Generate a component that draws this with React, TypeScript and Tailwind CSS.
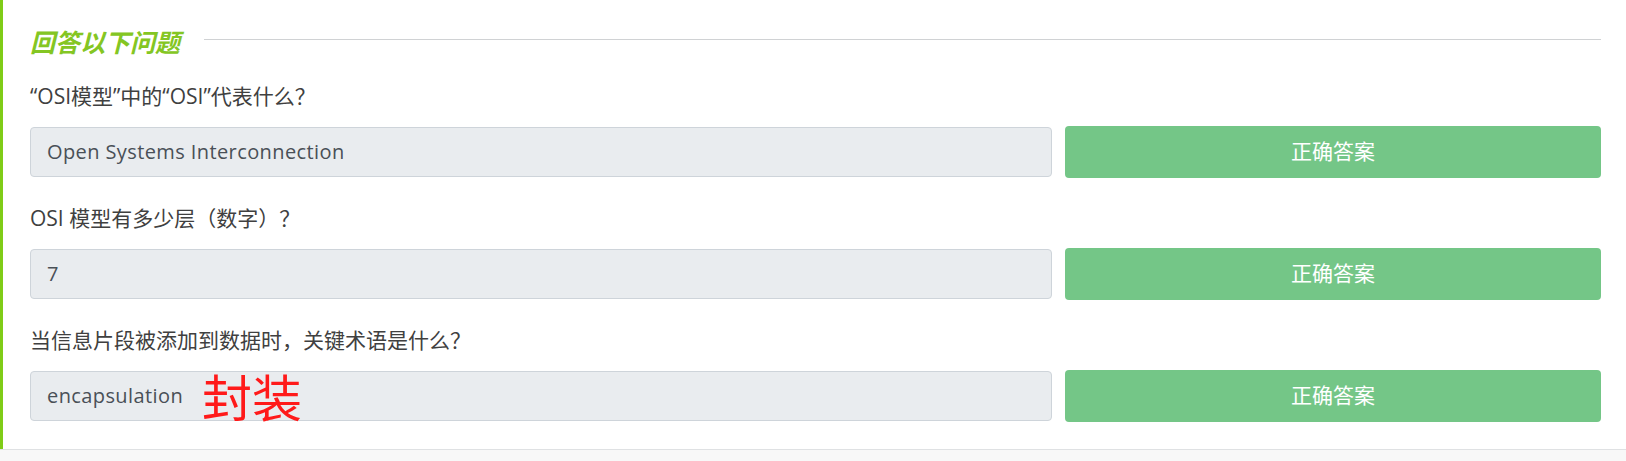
const questions = [
  { q: "“OSI模型”中的“OSI”代表什么？", a: "Open Systems Interconnection" },
  { q: "OSI 模型有多少层（数字）？", a: "7" },
  { q: "当信息片段被添加到数据时，关键术语是什么？", a: "encapsulation", note: "封装" },
];

const latin = "font-['Open_Sans','Noto_Sans_CJK_SC',sans-serif]";

export default function App() {
  return (
    <div className={`min-h-[461px] bg-white ${latin}`}>
      <div className="border-l-[3px] border-[#7fcc17] pt-[26px] pb-[27px] pl-[27px] pr-[25px]">
        <div className="flex h-8 items-center">
          <h2 className="text-[25px] font-bold italic leading-8 text-[#84c623]">回答以下问题</h2>
          <div className="mb-[5px] ml-[24px] h-px flex-1 bg-[#d0d2d4]" />
        </div>

        <div className="mt-6 flex flex-col gap-[26px]">
          {questions.map((item) => (
            <div key={item.a}>
              <p className="h-7 text-[21px] leading-7 text-[#404040]">{item.q}</p>
              <div className="mt-4 flex h-[52px] items-center gap-[13px]">
                <div className="relative flex h-[50px] w-[1022px] items-center rounded-[4px] border border-[#ced4da] bg-[#e9ecef] px-4 text-[20px] tracking-[0.4px] text-[#495057]">
                  {item.a}
                  {item.note && (
                    <span className="absolute left-[171px] top-[-4px] font-['Noto_Sans_CJK_SC',sans-serif] text-[50px] leading-[54px] tracking-normal text-[#ff1a1a]">
                      {item.note}
                    </span>
                  )}
                </div>
                <button
                  type="button"
                  className="h-[52px] flex-1 rounded-[4px] bg-[#74c687] text-[21px] text-white"
                >
                  正确答案
                </button>
              </div>
            </div>
          ))}
        </div>
      </div>
      <div className="h-[12px] border-t border-[#dfe1e3] bg-[#f8f8f8]" />
    </div>
  );
}
